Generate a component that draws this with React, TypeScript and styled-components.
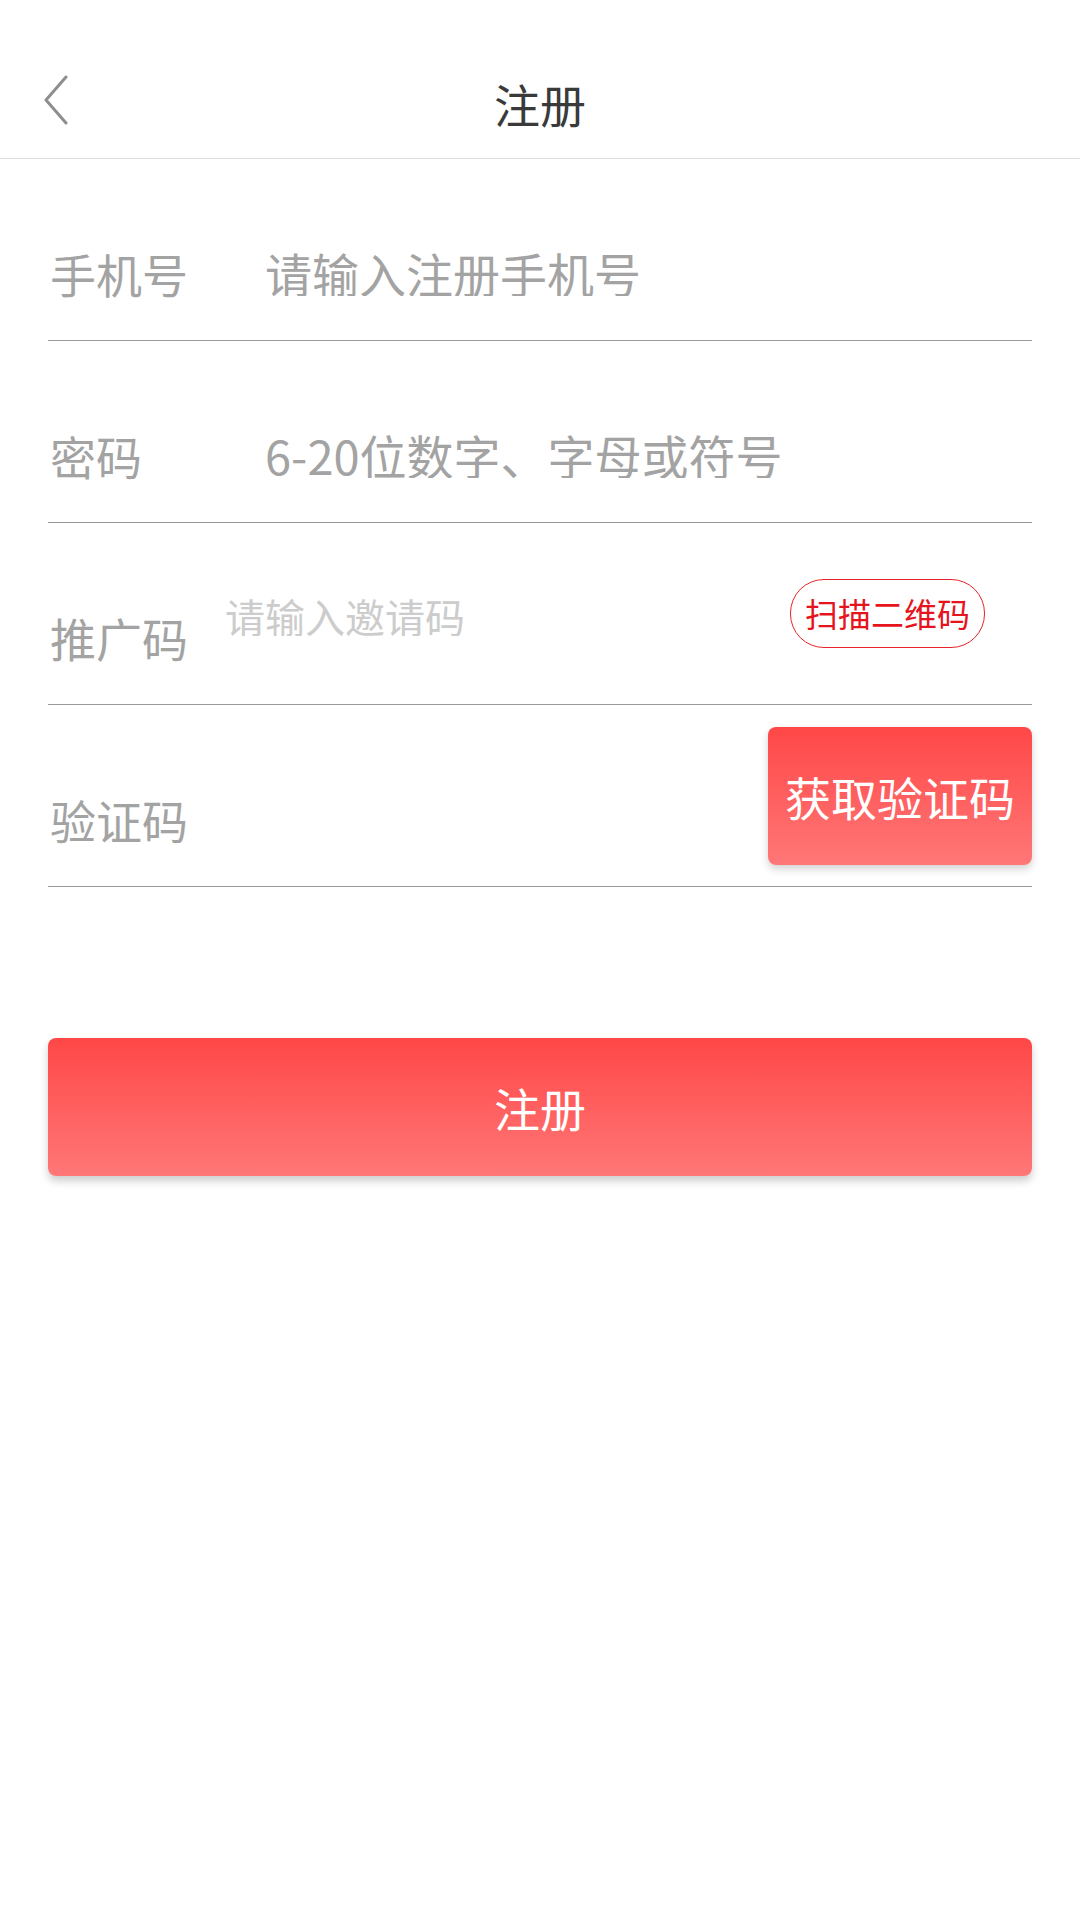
import React from 'react';
import styled, { createGlobalStyle } from 'styled-components';

const GlobalStyle = createGlobalStyle`
  html, body {
    margin: 0;
    padding: 0;
    background: #ffffff;
    font-family: "Noto Sans CJK SC", "Noto Sans", sans-serif;
  }
`;

const BackIcon = () => (
  <svg width="26" height="50" viewBox="0 0 26 50">
    <polyline
      points="23,2 3,25 23,48"
      fill="none"
      stroke="#8e8e8e"
      strokeWidth="3"
      strokeLinecap="round"
      strokeLinejoin="round"
    />
  </svg>
);

const App: React.FC = () => {
  return (
    <>
      <GlobalStyle />
      <Page>
        <Header>
          <BackButton>
            <BackIcon />
          </BackButton>
          <Title>注册</Title>
        </Header>
        <Form>
          <Row>
            <Label>手机号</Label>
            <Input placeholder="请输入注册手机号" />
          </Row>
          <Row>
            <Label>密码</Label>
            <Input type="text" placeholder="6-20位数字、字母或符号" />
          </Row>
          <Row>
            <Label $width={177}>推广码</Label>
            <Input $small placeholder="请输入邀请码" />
            <ScanButton>扫描二维码</ScanButton>
          </Row>
          <Row>
            <Label>验证码</Label>
            <Input />
            <CodeButton>获取验证码</CodeButton>
          </Row>
          <SubmitButton>注册</SubmitButton>
        </Form>
      </Page>
    </>
  );
};

export default App;

const Page = styled.div`
  width: 1080px;
  min-height: 1920px;
  background: #ffffff;
`;

const Header = styled.div`
  position: relative;
  height: 108px;
  padding-top: 50px;
  display: flex;
  align-items: center;
  justify-content: center;
  border-bottom: 1px solid #dddddd;
`;

const BackButton = styled.div`
  position: absolute;
  left: 43px;
  top: 75px;
  width: 26px;
  height: 50px;
  display: flex;
`;

const Title = styled.div`
  font-size: 46px;
  line-height: 46px;
  margin-top: -2px;
  color: #3a3a3a;
`;

const Form = styled.div`
  padding: 0 48px;
  display: flex;
  flex-direction: column;
`;

const Row = styled.div`
  height: 181px;
  display: flex;
  align-items: center;
  border-bottom: 1px solid #999999;
`;

const Label = styled.div<{ $width?: number }>`
  flex: 0 0 ${(p) => p.$width ?? 217}px;
  margin-top: 46px;
  padding-left: 2px;
  box-sizing: border-box;
  font-size: 46px;
  line-height: 46px;
  color: #a3a3a3;
  white-space: nowrap;
`;

const Input = styled.input<{ $small?: boolean }>`
  flex: 1;
  min-width: 0;
  border: none;
  outline: none;
  padding: 0;
  background: transparent;
  font-family: "Noto Sans CJK SC", "Noto Sans", sans-serif;
  font-size: ${(p) => (p.$small ? 40 : 47)}px;
  line-height: ${(p) => (p.$small ? 40 : 47)}px;
  height: ${(p) => (p.$small ? 40 : 47)}px;
  margin-top: ${(p) => (p.$small ? 4 : 46)}px;
  color: #333333;

  &::placeholder {
    color: ${(p) => (p.$small ? '#cccccc' : '#a3a3a3')};
  }
`;

const ScanButton = styled.div`
  flex: 0 0 auto;
  margin-right: 47px;
  height: 67px;
  padding: 0 14px;
  display: flex;
  align-items: center;
  border: 1.5px solid #e8232b;
  border-radius: 34px;
  font-size: 33px;
  line-height: 33px;
  color: #e5141d;
`;

const CodeButton = styled.div`
  flex: 0 0 264px;
  height: 138px;
  display: flex;
  align-items: center;
  justify-content: center;
  border-radius: 8px;
  background: linear-gradient(180deg, #ff4747 0%, #ff7777 100%);
  box-shadow: 0 4px 8px rgba(0, 0, 0, 0.18);
  font-size: 46px;
  line-height: 46px;
  color: #ffffff;
`;

const SubmitButton = styled.div`
  margin-top: 151px;
  height: 138px;
  display: flex;
  align-items: center;
  justify-content: center;
  border-radius: 8px;
  background: linear-gradient(180deg, #ff4747 0%, #ff7777 100%);
  box-shadow: 0 5px 8px rgba(0, 0, 0, 0.2);
  font-size: 46px;
  line-height: 46px;
  color: #ffffff;
`;
